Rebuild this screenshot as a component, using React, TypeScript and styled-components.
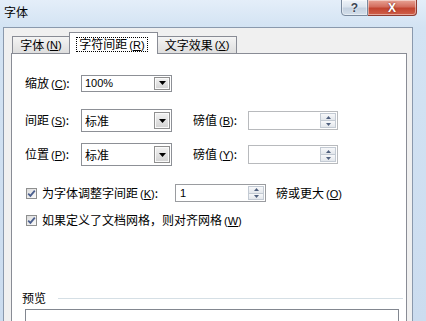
import React from "react";
import styled, { createGlobalStyle } from "styled-components";

const Global = createGlobalStyle`
  html, body { margin: 0; padding: 0; overflow: hidden; }
  body { font-family: "Noto Sans CJK SC", "Noto Sans", sans-serif; font-size: 12px; color: #000; }
`;

const Window = styled.div`
  width: 426px;
  height: 321px;
  display: flex;
  flex-direction: column;
  overflow: hidden;
  background: linear-gradient(180deg, #e4eef9 0px, #d3e3f3 27px, #cbdcef 321px);
`;

const TitleBar = styled.div`
  height: 27px;
  flex-shrink: 0;
  display: flex;
  align-items: flex-start;
`;

const Title = styled.div`
  padding: 5px 0 0 4px;
  line-height: 14px;
  font-size: 12px;
`;

const Buttons = styled.div`
  margin-left: auto;
  margin-right: 9px;
  margin-top: -1px;
  display: flex;
`;

const CaptionButton = styled.div<{ $w: number; $close?: boolean }>`
  width: ${(p) => p.$w}px;
  height: 17px;
  box-sizing: border-box;
  display: flex;
  align-items: center;
  justify-content: center;
  border: 1px solid ${(p) => (p.$close ? "#8d3b31" : "#7a8a9e")};
  border-left-width: ${(p) => (p.$close ? 0 : 1)}px;
  border-radius: ${(p) => (p.$close ? "0 0 4px 0" : "0 0 0 4px")};
  background: ${(p) =>
    p.$close
      ? "linear-gradient(180deg, #e8a496 0%, #d36d5d 45%, #c24430 55%, #d0604a 100%)"
      : "linear-gradient(180deg, #eef3f9 0%, #dbe4ee 45%, #c4d1e0 55%, #d4dfeb 100%)"};
  box-shadow: inset 0 0 0 1px rgba(255, 255, 255, 0.45);
  font-family: "Liberation Sans", sans-serif;
  font-weight: bold;
  font-size: 12px;
  line-height: 12px;
  color: ${(p) => (p.$close ? "#fff" : "#3c4654")};
  text-shadow: ${(p) => (p.$close ? "0 0 2px #6a1e14" : "0 0 2px #fff")};
`;

const Client = styled.div`
  flex: 1;
  margin: 0 13px 0 3px;
  border: 1px solid #8a99ad;
  border-bottom: none;
  background: #f0f0f0;
  padding: 0 5px 0 7px;
  display: flex;
  flex-direction: column;
  min-height: 0;
`;

const TabRow = styled.div`
  height: 26px;
  margin-bottom: -1px;
  padding-left: 1px;
  display: flex;
  align-items: flex-end;
  position: relative;
  z-index: 1;
`;

const Tab = styled.div<{ $w: number; $active?: boolean }>`
  width: ${(p) => p.$w}px;
  height: ${(p) => (p.$active ? 22 : 17)}px;
  margin-bottom: ${(p) => (p.$active ? 0 : 1)}px;
  margin-left: ${(p) => (p.$first ? 0 : -1)}px;
  box-sizing: border-box;
  border: 1px solid #898c95;
  border-bottom: none;
  background: ${(p) =>
    p.$active ? "#ffffff" : "linear-gradient(180deg, #f4f4f4 0%, #e9e9e9 50%, #dedede 100%)"};
  display: flex;
  align-items: ${(p) => (p.$active ? "flex-start" : "center")};
  justify-content: center;
  padding-top: ${(p) => (p.$active ? 4 : 0)}px;
  position: relative;
  z-index: ${(p) => (p.$active ? 2 : 1)};
  font-size: 12px;
  line-height: 12px;
  white-space: nowrap;
` as any;

const Focus = styled.span`
  border: 1px dotted #000;
  padding: 0 2px;
  line-height: 12px;
  margin-right: 3px;
`;

const Mn = styled.span`
  font-family: "Liberation Sans", sans-serif;
  font-size: 11px;
  margin-left: 2px;
  & u { text-underline-offset: 1px; }
`;

const Panel = styled.div`
  flex: 1;
  min-height: 0;
  background: #fff;
  border: 1px solid #898c95;
  border-bottom: none;
  padding-left: 13px;
  display: flex;
  flex-direction: column;
`;

const Row = styled.div<{ $mt: number; $h?: number }>`
  margin-top: ${(p) => p.$mt}px;
  height: ${(p) => p.$h ?? 22}px;
  display: flex;
  align-items: center;
  flex-shrink: 0;
`;

const Label = styled.div<{ $w: number; $ml?: number }>`
  width: ${(p) => p.$w}px;
  margin-left: ${(p) => p.$ml ?? 0}px;
  white-space: nowrap;
  line-height: 14px;
  flex-shrink: 0;
`;

const Select = styled.div<{ $h: number }>`
  width: 91px;
  height: ${(p) => p.$h}px;
  box-sizing: border-box;
  border: 1px solid #8d9096;
  background: #fff;
  display: flex;
  align-items: center;
  padding: ${(p) => (p.$h > 18 ? 2 : 1)}px 1px ${(p) => (p.$h > 18 ? 2 : 1)}px 3px;
  flex-shrink: 0;
`;

const SelectText = styled.span<{ $latin?: boolean }>`
  flex: 1;
  font-family: ${(p) => (p.$latin ? '"Liberation Sans", sans-serif' : "inherit")};
  font-size: ${(p) => (p.$latin ? 11 : 12)}px;
  line-height: 12px;
`;

const DropButton = styled.div`
  width: 16px;
  align-self: stretch;
  box-sizing: border-box;
  border: 1px solid #8f8f8f;
  background: linear-gradient(180deg, #f2f2f2 0%, #e2e2e2 50%, #d2d2d2 100%);
  box-shadow: inset 0 0 0 1px #fafafa;
  display: flex;
  align-items: center;
  justify-content: center;
`;

const SpinBox = styled.div<{ $w: number; $disabled?: boolean }>`
  width: ${(p) => p.$w}px;
  height: ${(p) => (p.$disabled ? 19 : 18)}px;
  box-sizing: border-box;
  border: 1px solid ${(p) => (p.$disabled ? "#b8babd" : "#9a9ca0")};
  background: #fff;
  display: flex;
  align-items: stretch;
  padding: 1px;
  flex-shrink: 0;
`;

const SpinValue = styled.span`
  flex: 1;
  padding-left: 3px;
  font-family: "Liberation Sans", sans-serif;
  font-size: 11px;
  line-height: 14px;
`;

const Spinner = styled.div`
  width: 16px;
  display: flex;
  flex-direction: column;
  border: 1px solid #c3cad3;
  box-sizing: border-box;
`;

const SpinHalf = styled.div<{ $down?: boolean }>`
  flex: 1;
  display: flex;
  align-items: center;
  justify-content: center;
  background: linear-gradient(180deg, #f7f8fa, #e3e7ec);
  border-top: ${(p) => (p.$down ? "1px solid #c3cad3" : "none")};
`;

const Check = styled.div`
  width: 11px;
  height: 11px;
  box-sizing: border-box;
  border: 1px solid #8e8f8f;
  background: linear-gradient(135deg, #dcdcdc, #fbfbfb);
  margin-left: 1px;
  margin-right: 5px;
  display: flex;
  align-items: center;
  justify-content: center;
  flex-shrink: 0;
`;

const Text = styled.span`
  white-space: nowrap;
  line-height: 14px;
`;

const Legend = styled.div`
  margin-top: 56px;
  height: 22px;
  display: flex;
  align-items: center;
  margin-left: -3px;
  flex-shrink: 0;
`;

const LegendLine = styled.div`
  flex: 1;
  height: 1px;
  background: #d5dfe5;
  margin: 1px 3px 0 12px;
`;

const Preview = styled.div`
  flex: 1;
  width: 374px;
  box-sizing: border-box;
  border: 1px solid #828790;
  border-bottom: none;
  background: #fff;
`;

const DownTri = () => (
  <svg width="7" height="4" viewBox="0 0 7 4">
    <path d="M0 0H7L3.5 4Z" fill="#000" />
  </svg>
);

const SpinTri = ({ up }: { up?: boolean }) => (
  <svg width="5" height="3" viewBox="0 0 5 3">
    <path d={up ? "M0 3H5L2.5 0Z" : "M0 0H5L2.5 3Z"} fill="#50607e" />
  </svg>
);

const CheckMark = () => (
  <svg width="9" height="9" viewBox="0 0 9 9">
    <path d="M1.2 4.6 L3.4 6.8 L7.8 1.6" fill="none" stroke="#4b5f8e" strokeWidth="1.8" />
  </svg>
);

const M = ({ k }: { k: string }) => (
  <Mn>
    (<u>{k}</u>)
  </Mn>
);

const Spin = ({ w, value, disabled }: { w: number; value?: string; disabled?: boolean }) => (
  <SpinBox $w={w} $disabled={disabled}>
    <SpinValue>{value}</SpinValue>
    <Spinner>
      <SpinHalf>
        <SpinTri up />
      </SpinHalf>
      <SpinHalf $down>
        <SpinTri />
      </SpinHalf>
    </Spinner>
  </SpinBox>
);

export default function App() {
  return (
    <>
      <Global />
      <Window>
        <TitleBar>
          <Title>字体</Title>
          <Buttons>
            <CaptionButton $w={27}>?</CaptionButton>
            <CaptionButton $w={49} $close>
              X
            </CaptionButton>
          </Buttons>
        </TitleBar>
        <Client>
          <TabRow>
            <Tab $w={58} $first>
              字体<M k="N" />
            </Tab>
            <Tab $w={89} $active>
              <Focus>
                字符间距<M k="R" />
              </Focus>
            </Tab>
            <Tab $w={80}>
              文字效果<M k="X" />
            </Tab>
          </TabRow>
          <Panel>
            <Row $mt={18}>
              <Label $w={56}>
                缩放<M k="C" />:
              </Label>
              <Select $h={17}>
                <SelectText $latin>100%</SelectText>
                <DropButton>
                  <DownTri />
                </DropButton>
              </Select>
            </Row>
            <Row $mt={15} $h={23}>
              <Label $w={56}>
                间距<M k="S" />:
              </Label>
              <Select $h={23}>
                <SelectText>标准</SelectText>
                <DropButton>
                  <DownTri />
                </DropButton>
              </Select>
              <Label $w={55} $ml={21}>
                磅值<M k="B" />:
              </Label>
              <Spin w={90} disabled />
            </Row>
            <Row $mt={11} $h={23}>
              <Label $w={56}>
                位置<M k="P" />:
              </Label>
              <Select $h={23}>
                <SelectText>标准</SelectText>
                <DropButton>
                  <DownTri />
                </DropButton>
              </Select>
              <Label $w={55} $ml={21}>
                磅值<M k="Y" />:
              </Label>
              <Spin w={90} disabled />
            </Row>
            <Row $mt={16}>
              <Check>
                <CheckMark />
              </Check>
              <Label $w={133}>
                为字体调整字间距<M k="K" />:
              </Label>
              <Spin w={91} value="1" />
              <Label $w={90} $ml={10}>
                磅或更大<M k="O" />
              </Label>
            </Row>
            <Row $mt={5}>
              <Check>
                <CheckMark />
              </Check>
              <Text>
                如果定义了文档网格，则对齐网格<M k="W" />
              </Text>
            </Row>
            <Legend>
              <Text>预览</Text>
              <LegendLine />
            </Legend>
            <Preview />
          </Panel>
        </Client>
      </Window>
    </>
  );
}
